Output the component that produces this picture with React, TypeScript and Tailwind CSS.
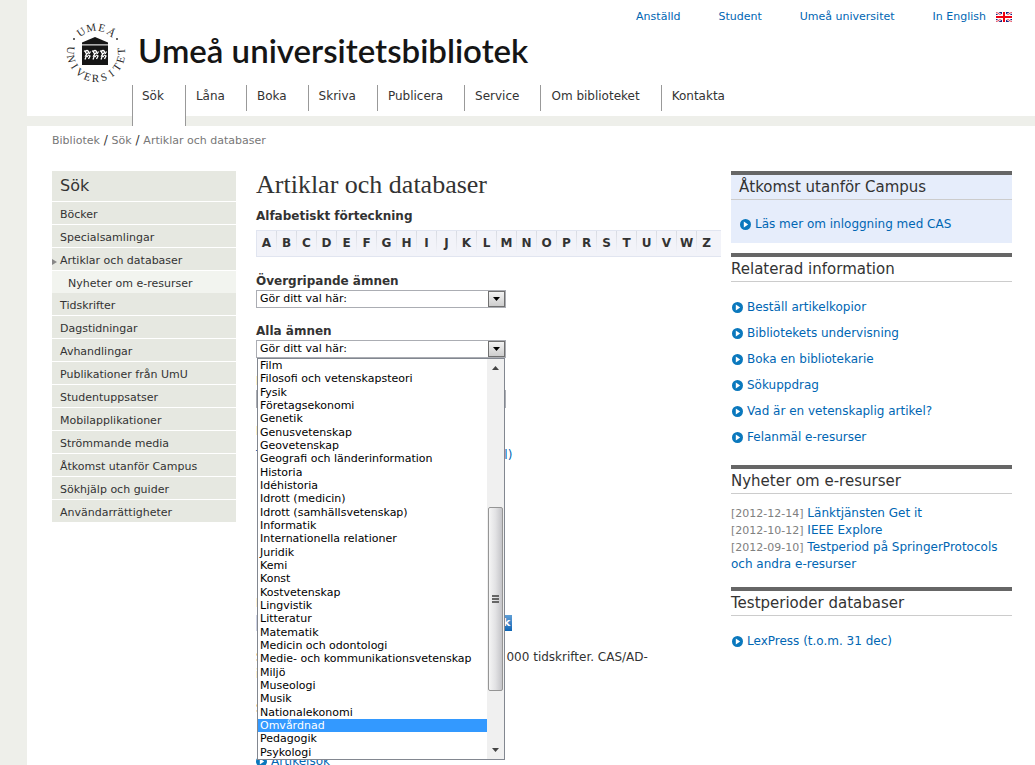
import type { ReactNode } from 'react'

const topLinks = ['Anställd', 'Student', 'Umeå universitet']

const navItems = ['Sök', 'Låna', 'Boka', 'Skriva', 'Publicera', 'Service', 'Om biblioteket', 'Kontakta']

const sideItems = [
  { label: 'Böcker' },
  { label: 'Specialsamlingar' },
  { label: 'Artiklar och databaser', open: true },
  { label: 'Nyheter om e-resurser', child: true },
  { label: 'Tidskrifter' },
  { label: 'Dagstidningar' },
  { label: 'Avhandlingar' },
  { label: 'Publikationer från UmU' },
  { label: 'Studentuppsatser' },
  { label: 'Mobilapplikationer' },
  { label: 'Strömmande media' },
  { label: 'Åtkomst utanför Campus' },
  { label: 'Sökhjälp och guider' },
  { label: 'Användarrättigheter' },
]

const letters = 'ABCDEFGHIJKLMNOPRSTUVWZ'.split('')

const subjects = [
  'Film',
  'Filosofi och vetenskapsteori',
  'Fysik',
  'Företagsekonomi',
  'Genetik',
  'Genusvetenskap',
  'Geovetenskap',
  'Geografi och länderinformation',
  'Historia',
  'Idéhistoria',
  'Idrott (medicin)',
  'Idrott (samhällsvetenskap)',
  'Informatik',
  'Internationella relationer',
  'Juridik',
  'Kemi',
  'Konst',
  'Kostvetenskap',
  'Lingvistik',
  'Litteratur',
  'Matematik',
  'Medicin och odontologi',
  'Medie- och kommunikationsvetenskap',
  'Miljö',
  'Museologi',
  'Musik',
  'Nationalekonomi',
  'Omvårdnad',
  'Pedagogik',
  'Psykologi',
]

const relatedLinks = [
  'Beställ artikelkopior',
  'Bibliotekets undervisning',
  'Boka en bibliotekarie',
  'Sökuppdrag',
  'Vad är en vetenskaplig artikel?',
  'Felanmäl e-resurser',
]

const news = [
  { date: '2012-12-14', title: 'Länktjänsten Get it' },
  { date: '2012-10-12', title: 'IEEE Explore' },
  { date: '2012-09-10', title: 'Testperiod på SpringerProtocols och andra e-resurser' },
]

// Letters sit on a ring, angle in degrees clockwise from twelve o'clock
const sealTop = 'UMEÅ'.split('').map((char, i) => ({ char, angle: -35 + i * 24 }))
const sealBottom = 'UNIVERSITET'.split('').map((char, i) => ({ char, angle: 276 - i * 19 }))

function Seal() {
  return (
    <svg viewBox="0 0 60 62" className="w-[60px] h-[62px]" role="img" aria-label="Umeå universitet">
      <g fill="#2a2a2a" fontSize="11" textAnchor="middle" className="font-['Liberation_Serif',serif]">
        {sealTop.map(({ char, angle }) => (
          <text key={angle} x="30" y="9" transform={`rotate(${angle} 30 31)`}>{char}</text>
        ))}
        {sealBottom.map(({ char, angle }) => (
          <text key={angle} x="30" y="60" transform={`rotate(${angle - 180} 30 31)`}>{char}</text>
        ))}
      </g>
      <circle cx="8" cy="17" r="1" fill="#333" />
      <circle cx="51" cy="17" r="1" fill="#333" />
      <path d="M16 22v-1.500L29 15l13 5.500V22z" fill="#151515" />
      <path d="M16 22h26v1.500H16z" fill="#aaa" />
      <path d="M16 23.500h26V43H16z" fill="#151515" />
      {[18, 26, 34].map((x) => (
        <g key={x} transform={`translate(${x} 28)`} stroke="#fff" fill="none" strokeWidth="1.300">
          <circle cx="3" cy="2" r="1.500" />
          <path d="M0 1.500l1.500-1M5 4l1.500-2.500M3 3.500L1.500 6 4 6.500M4 5l2 1-1.500 3M2 7L1 9.500" />
        </g>
      ))}
    </svg>
  )
}

function Flag() {
  return (
    <svg viewBox="0 0 16 10" className="w-4 h-[10px]" aria-hidden="true">
      <path d="M0 0h16v10H0z" fill="#1a237e" />
      <path d="M0 0l16 10M16 0L0 10" stroke="#fff" strokeWidth="2.400" />
      <path d="M0 0l16 10M16 0L0 10" stroke="#e0102a" strokeWidth="0.800" />
      <path d="M8 0v10M0 5h16" stroke="#fff" strokeWidth="4" />
      <path d="M8 0v10M0 5h16" stroke="#f00010" strokeWidth="2" />
    </svg>
  )
}

function ArrowLink({ children }: { children: ReactNode }) {
  return (
    <a href="#" className="flex w-fit items-center gap-1 text-[#0066b3]">
      <svg viewBox="0 0 11 11" className="w-[11px] h-[11px] shrink-0" aria-hidden="true">
        <circle cx="5.500" cy="5.500" r="5.500" fill="#0a78bd" />
        <path d="M3.800 2.600v5.800l4.400-2.900z" fill="#fff" />
      </svg>
      {children}
    </a>
  )
}

function SubjectSelect({ id, label, children }: { id: string; label: string; children?: ReactNode }) {
  return (
    <div className="relative mb-[14px]">
      <label htmlFor={id} className="block h-[18px] leading-[18px] font-bold">{label}</label>
      <div className="flex w-[250px] h-[18px] border border-[#abadb3] bg-white">
        <select id={id} className="flex-1 min-w-0 appearance-none pl-[3px] text-[11px] leading-4 text-black outline-none">
          <option>Gör ditt val här:</option>
        </select>
        <span className="flex w-[17px] items-center justify-center border border-[#707070] bg-linear-to-b from-[#f3f3f3] to-[#cdcdcd]" aria-hidden="true">
          <svg viewBox="0 0 7 4" className="w-[7px] h-1">
            <path d="M0 0h7L3.500 4z" fill="#000" />
          </svg>
        </span>
      </div>
      {children}
    </div>
  )
}

function SubjectMenu() {
  return (
    <div className="absolute left-px top-9 z-10 flex w-[248px] h-[402px] border border-[#828790] bg-white">
      <ul role="listbox" aria-label="Alla ämnen" className="grid flex-1 auto-rows-fr text-[11px] leading-[13px] text-black">
        {subjects.map((subject) => (
          <li
            key={subject}
            role="option"
            aria-selected={subject === 'Omvårdnad'}
            className="pl-[2px] whitespace-nowrap aria-selected:bg-[#3399ff] aria-selected:text-white"
          >
            {subject}
          </li>
        ))}
      </ul>
      <div className="flex w-[17px] flex-col items-center bg-[#f0f0f0]" aria-hidden="true">
        <svg viewBox="0 0 7 4" className="mt-[7px] w-[7px] h-1"><path d="M0 4h7L3.500 0z" fill="#444" /></svg>
        <div className="mt-[137px] flex w-[15px] h-[184px] flex-col items-center justify-center gap-px rounded-xs border border-[#959595] bg-linear-to-r from-[#f5f5f5] via-[#e2e2e4] to-[#c4c4c8]">
          <span className="w-[7px] h-[2px] bg-[#666]" />
          <span className="w-[7px] h-[2px] bg-[#666]" />
          <span className="w-[7px] h-[2px] bg-[#666]" />
        </div>
        <svg viewBox="0 0 7 4" className="mt-auto mb-[7px] w-[7px] h-1"><path d="M0 0h7L3.500 4z" fill="#444" /></svg>
      </div>
    </div>
  )
}

function PanelHeading({ children, inset }: { children: ReactNode; inset?: boolean }) {
  return (
    <h2 className={`border-t-4 border-b border-t-[#666] border-b-[#ccc] text-[15px] leading-6 ${inset ? 'pl-2' : ''}`}>
      {children}
    </h2>
  )
}

function Header() {
  return (
    <header>
      <div className="flex h-[85px] justify-between pl-[39px] pr-[23px]">
        <div className="flex gap-3 pt-[22px]">
          <Seal />
          <p className="pt-2 font-['Lato',sans-serif] text-[33px] leading-10 font-semibold whitespace-nowrap text-[#151515]">
            Umeå universitetsbibliotek
          </p>
        </div>
        <div className="flex h-[34px] items-center gap-[38px] text-[11px] text-[#0066b3]">
          {topLinks.map((link) => (
            <a key={link} href="#">{link}</a>
          ))}
          <a href="#" className="flex items-center gap-[10px]">In English <Flag /></a>
        </div>
      </div>
      <nav className="flex h-[41px] items-start border-b-[10px] border-[#eeefea] pl-[105px]">
        {navItems.map((item, i) => (
          <a
            key={item}
            href="#"
            className={
              i === 0
                ? 'h-[41px] border-x border-[#999] bg-white pl-[9px] pr-[21px] leading-[22px]'
                : `h-[26px] pl-[10px] pr-[21px] leading-[22px] ${i > 1 ? 'border-l border-[#999]' : ''}`
            }
          >
            {item}
          </a>
        ))}
      </nav>
    </header>
  )
}

function Sidebar() {
  return (
    <nav className="w-[184px] shrink-0 text-[11px]">
      <h2 className="bg-[#e6e8e1] pl-2 text-base leading-[30px]">Sök</h2>
      <ul>
        {sideItems.map(({ label, open, child }) => (
          <li key={label} className={child ? 'mt-px -mb-px bg-[#f2f4ef]' : 'mt-px bg-[#e6e8e1]'}>
            <a href="#" className="flex h-[22px] items-center pt-[5px]">
              <span className={child ? 'w-4' : 'w-2'}>
                {open && (
                  <svg viewBox="0 0 5 6" className="w-[5px] h-[6px]" aria-hidden="true"><path d="M0 0l5 3-5 3z" fill="#888" /></svg>
                )}
              </span>
              {label}
            </a>
          </li>
        ))}
      </ul>
    </nav>
  )
}

function Main() {
  return (
    <main className="ml-5 min-w-0 flex-1">
      <h1 className="font-['Liberation_Serif',serif] text-[26px] leading-7">Artiklar och databaser</h1>
      <h2 className="mt-2 leading-[18px] font-bold">Alfabetiskt förteckning</h2>
      <ul className="mt-[5px] mb-[15px] flex h-[27px] border-y border-l border-[#e1e5f0] bg-[#f2f3f9] font-bold">
        {letters.map((letter) => (
          <li key={letter} className="flex">
            <a href="#" className="w-[19px] text-center leading-[25px]">{letter}</a>
            {letter !== 'Z' && <span className="w-px h-[22px] bg-linear-to-b from-[#d8dbe2] to-[#f2f3f9]" />}
          </li>
        ))}
      </ul>
      <SubjectSelect id="overgripande" label="Övergripande ämnen" />
      <SubjectSelect id="alla" label="Alla ämnen">
        <SubjectMenu />
      </SubjectSelect>
      <SubjectSelect id="typ" label="Bläddra efter typ" />
      <h2 className="leading-[18px] font-bold">Publikationer</h2>
      <p className="mt-[6px] leading-[18px]">
        <a href="#" className="text-[#0066b3]">Tidningar och artiklar (med äldre material)</a>
      </p>
      <form className="mt-[130px]">
        <label htmlFor="q" className="block h-[21px] leading-[18px]">I Umeå</label>
        <div className="flex w-[256px] h-4">
          <input id="q" type="text" className="min-w-0 flex-1 border border-[#cfd3e4] bg-white" />
          <button type="button" className="w-[26px] bg-linear-to-b from-[#5f9fd6] to-[#0a66b5] text-[11px] leading-4 font-bold text-white">Sök</button>
        </div>
      </form>
      <p className="mt-[18px] leading-[17px]">
        Söktjänster med artiklar från mer än 100 000 tidskrifter. CAS/AD-
        <br />
        inloggning.
      </p>
      <h2 className="mt-4 leading-[18px]">Svenska artiklar</h2>
      <p className="mt-9 leading-[17px]"><ArrowLink>Artikelsök</ArrowLink></p>
    </main>
  )
}

function Aside() {
  return (
    <aside className="ml-[10px] w-[281px] shrink-0">
      <section className="bg-[#e6edfb]">
        <PanelHeading inset>Åtkomst utanför Campus</PanelHeading>
        <div className="px-[9px] pt-4 pb-[10px] leading-[17px]"><ArrowLink>Läs mer om inloggning med CAS</ArrowLink></div>
      </section>
      <section className="mt-[10px]">
        <PanelHeading>Relaterad information</PanelHeading>
        <ul className="mt-3 pl-px leading-[26px]">
          {relatedLinks.map((link) => (
            <li key={link}><ArrowLink>{link}</ArrowLink></li>
          ))}
        </ul>
      </section>
      <section className="mt-[15px]">
        <PanelHeading>Nyheter om e-resurser</PanelHeading>
        <ul className="mt-[11px] leading-[17px]">
          {news.map(({ date, title }) => (
            <li key={date}>
              <span className="text-[11px] text-[#808080]">[{date}]</span>{' '}
              <a href="#" className="text-[#0066b3]">{title}</a>
            </li>
          ))}
        </ul>
      </section>
      <section className="mt-[14px]">
        <PanelHeading>Testperioder databaser</PanelHeading>
        <div className="mt-3 pl-px leading-[26px]"><ArrowLink>LexPress (t.o.m. 31 dec)</ArrowLink></div>
      </section>
    </aside>
  )
}

export default function App() {
  return (
    <div className="min-h-screen bg-[#eeefea] pl-[27px] font-['DejaVu_Sans',sans-serif] text-xs text-[#333]">
      <div className="min-h-screen bg-white">
        <Header />
        <p className="h-[45px] pl-[25px] pt-[6px] leading-4">
          <a href="#" className="text-[11px] text-[#777]">Bibliotek</a> /{' '}
          <a href="#" className="text-[11px] text-[#777]">Sök</a> /{' '}
          <a href="#" className="text-[11px] text-[#777]">Artiklar och databaser</a>
        </p>
        <div className="flex pl-[25px] pr-[23px]">
          <Sidebar />
          <Main />
          <Aside />
        </div>
      </div>
    </div>
  )
}
